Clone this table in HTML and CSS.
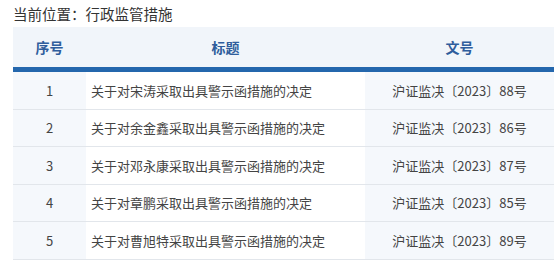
FILE: index.html
```html
<!DOCTYPE html>
<html lang="zh">
<head>
<meta charset="utf-8">
<link rel="stylesheet" href="styles.css">
</head>
<body>
<div class="page">
  <div class="crumb">当前位置：行政监管措施</div>
  <table class="list">
    <thead>
      <tr><th class="c1">序号</th><th class="c2">标题</th><th class="c3">文号</th></tr>
    </thead>
    <tbody>
      <tr><td class="c1">1</td><td class="c2">关于对宋涛采取出具警示函措施的决定</td><td class="c3">沪证监决〔2023〕88号</td></tr>
      <tr><td class="c1">2</td><td class="c2">关于对余金鑫采取出具警示函措施的决定</td><td class="c3">沪证监决〔2023〕86号</td></tr>
      <tr><td class="c1">3</td><td class="c2">关于对邓永康采取出具警示函措施的决定</td><td class="c3">沪证监决〔2023〕87号</td></tr>
      <tr><td class="c1">4</td><td class="c2">关于对章鹏采取出具警示函措施的决定</td><td class="c3">沪证监决〔2023〕85号</td></tr>
      <tr><td class="c1">5</td><td class="c2">关于对曹旭特采取出具警示函措施的决定</td><td class="c3">沪证监决〔2023〕89号</td></tr>
    </tbody>
  </table>
</div>
</body>
</html>
```
FILE: styles.css
```css
html, body {
  margin: 0;
  padding: 0;
  background: #fff;
}
.page {
  padding: 4px 0 0 13px;
  font-family: "Noto Sans CJK SC", "Microsoft YaHei", sans-serif;
  color: #333;
}
.crumb {
  font-size: 14.5px;
  line-height: 19px;
  height: 23px;
  color: #333;
}
.list {
  border-collapse: collapse;
  table-layout: fixed;
  width: 541px;
}
.list th {
  height: 40px;
  padding: 0;
  background: #f1f5fa;
  color: #2f5d9c;
  font-size: 14px;
  font-weight: bold;
  text-align: center;
  border-bottom: 5px solid #2467ad;
}
.list .c1 { width: 73px; }
.list .c2 { width: 279px; }
.list .c3 { width: 189px; }
.list td {
  height: 36.5px;
  padding: 0;
  font-size: 13px;
  color: #444;
  border-bottom: 1px solid #e2e6eb;
}
.list td.c1 {
  background: #f5f8fc;
  text-align: center;
}
.list td.c2 {
  padding-left: 5px;
  background: #fff;
}
.list td.c3 {
  background: #f5f8fc;
  text-align: center;
}
```
